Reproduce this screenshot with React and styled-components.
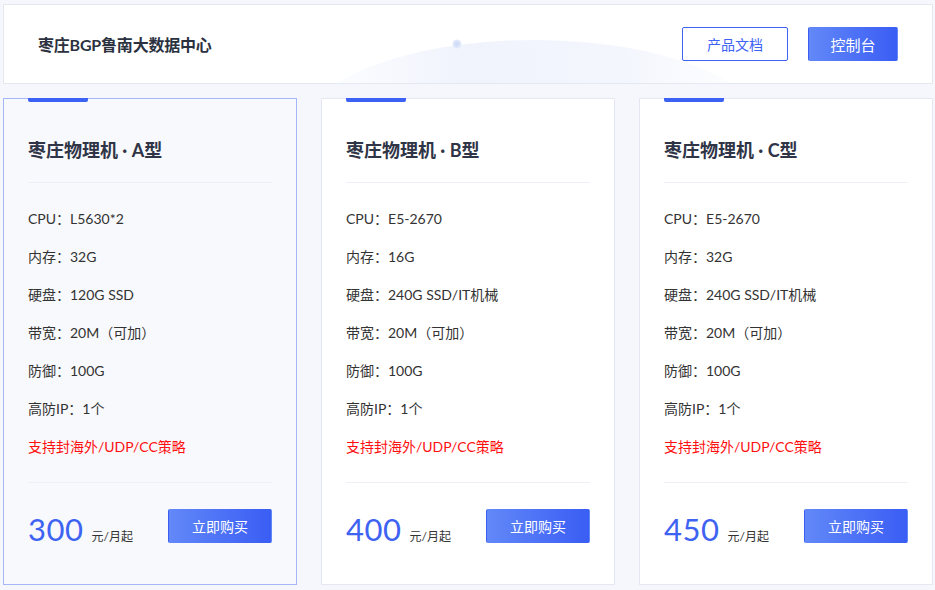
import React from "react";
import styled, { createGlobalStyle } from "styled-components";

const Global = createGlobalStyle`
  html, body { margin: 0; padding: 0; background: #f5f7fc; }
  body { font-family: Lato, "Noto Sans CJK SC", sans-serif; color: #333; }
  * { box-sizing: border-box; }
`;

const Page = styled.div`
  width: 935px;
  height: 590px;
  padding: 4px 2px 0 3px;
  display: flex;
  flex-direction: column;
  gap: 14px;
  overflow: hidden;
`;

const Header = styled.header`
  position: relative;
  height: 80px;
  background: #fff;
  border: 1px solid #e4e8f1;
  display: flex;
  align-items: center;
  justify-content: space-between;
  padding: 0 34px 0 34px;
  overflow: hidden;
`;

const Deco = styled.svg`
  position: absolute;
  left: 0;
  top: 0;
  pointer-events: none;
`;

const Title = styled.h1`
  position: relative;
  margin: 0;
  font-size: 16px;
  font-weight: 700;
  color: #2c3140;
  letter-spacing: -0.2px;
`;

const Actions = styled.div`
  position: relative;
  display: flex;
  gap: 20px;
`;

const Btn = styled.button`
  height: 34px;
  width: ${(p) => p.$w}px;
  border-radius: 2px;
  font-family: inherit;
  font-size: ${(p) => p.$size || 14}px;
  cursor: pointer;
  border: 1px solid ${(p) => (p.$primary ? "transparent" : "#3d62f4")};
  color: ${(p) => (p.$primary ? "#fff" : "#3d62f4")};
  background: ${(p) =>
    p.$primary ? "linear-gradient(90deg, #6288f8, #3a5df4)" : "#fff"};
  padding: 0;
`;

const Cards = styled.div`
  display: grid;
  grid-template-columns: repeat(3, 294px);
  gap: 24px;
`;

const Card = styled.div`
  position: relative;
  height: 487px;
  border: 1px solid ${(p) => (p.$active ? "#a6b7f7" : "#e3e8f2")};
  background: ${(p) => (p.$active ? "#f8f9fc" : "#fff")};
  padding: 0 24px;
  display: flex;
  flex-direction: column;
`;

const Accent = styled.span`
  position: absolute;
  top: -1px;
  left: 24px;
  width: 60px;
  height: 4px;
  background: #3b61f5;
  border-radius: 0 0 2px 2px;
`;

const CardHead = styled.div`
  padding: 38px 0 19px;
  border-bottom: 1px solid #edf0f6;
`;

const CardTitle = styled.h2`
  margin: 0;
  font-size: 18px;
  line-height: 26px;
  font-weight: 700;
  color: #2f3446;
`;

const Specs = styled.ul`
  list-style: none;
  margin: 0;
  padding: 17px 0 16px;
  border-bottom: 1px solid #edf0f6;
`;

const Spec = styled.li`
  font-size: 14px;
  line-height: 38px;
  color: ${(p) => (p.$red ? "#ff1010" : "#333")};
`;

const Foot = styled.div`
  padding-top: 26px;
  display: flex;
  justify-content: space-between;
  align-items: flex-start;
`;

const Price = styled.div`
  display: flex;
  align-items: baseline;
  gap: 8px;
  padding-top: 3px;
`;

const Amount = styled.span`
  font-size: 31px;
  line-height: 34px;
  color: #3e63f2;
  letter-spacing: 0.5px;
`;

const Unit = styled.span`
  font-size: 12px;
  color: #333;
`;

const plans = [
  { name: "枣庄物理机 · A型", cpu: "L5630*2", mem: "32G", disk: "120G SSD", price: 300, active: true },
  { name: "枣庄物理机 · B型", cpu: "E5-2670", mem: "16G", disk: "240G SSD/IT机械", price: 400 },
  { name: "枣庄物理机 · C型", cpu: "E5-2670", mem: "32G", disk: "240G SSD/IT机械", price: 450 },
];

export default function App() {
  return (
    <>
      <Global />
      <Page>
        <Header>
          <Deco width="930" height="80" viewBox="0 0 930 80">
            <defs>
              <linearGradient id="arc" x1="0" x2="1" y1="0" y2="0">
                <stop offset="0" stopColor="#eef2fc" stopOpacity="0" />
                <stop offset="0.35" stopColor="#eef2fc" stopOpacity="0.9" />
                <stop offset="0.7" stopColor="#f1f4fd" stopOpacity="0.8" />
                <stop offset="1" stopColor="#f4f6fd" stopOpacity="0" />
              </linearGradient>
              <radialGradient id="dot">
                <stop offset="0" stopColor="#c9d6f6" />
                <stop offset="1" stopColor="#e6ecfb" />
              </radialGradient>
            </defs>
            <ellipse cx="530" cy="125" rx="230" ry="90" fill="url(#arc)" />
            <circle cx="453" cy="39" r="4.5" fill="url(#dot)" />
          </Deco>
          <Title>枣庄BGP鲁南大数据中心</Title>
          <Actions>
            <Btn $w={106}>产品文档</Btn>
            <Btn $w={90} $size={15} $primary>控制台</Btn>
          </Actions>
        </Header>
        <Cards>
          {plans.map((p) => (
            <Card key={p.name} $active={p.active}>
              <Accent />
              <CardHead>
                <CardTitle>{p.name}</CardTitle>
              </CardHead>
              <Specs>
                <Spec>CPU：{p.cpu}</Spec>
                <Spec>内存：{p.mem}</Spec>
                <Spec>硬盘：{p.disk}</Spec>
                <Spec>带宽：20M（可加）</Spec>
                <Spec>防御：100G</Spec>
                <Spec>高防IP：1个</Spec>
                <Spec $red>支持封海外/UDP/CC策略</Spec>
              </Specs>
              <Foot>
                <Price>
                  <Amount>{p.price}</Amount>
                  <Unit>元/月起</Unit>
                </Price>
                <Btn $w={104} $primary>立即购买</Btn>
              </Foot>
            </Card>
          ))}
        </Cards>
      </Page>
    </>
  );
}
